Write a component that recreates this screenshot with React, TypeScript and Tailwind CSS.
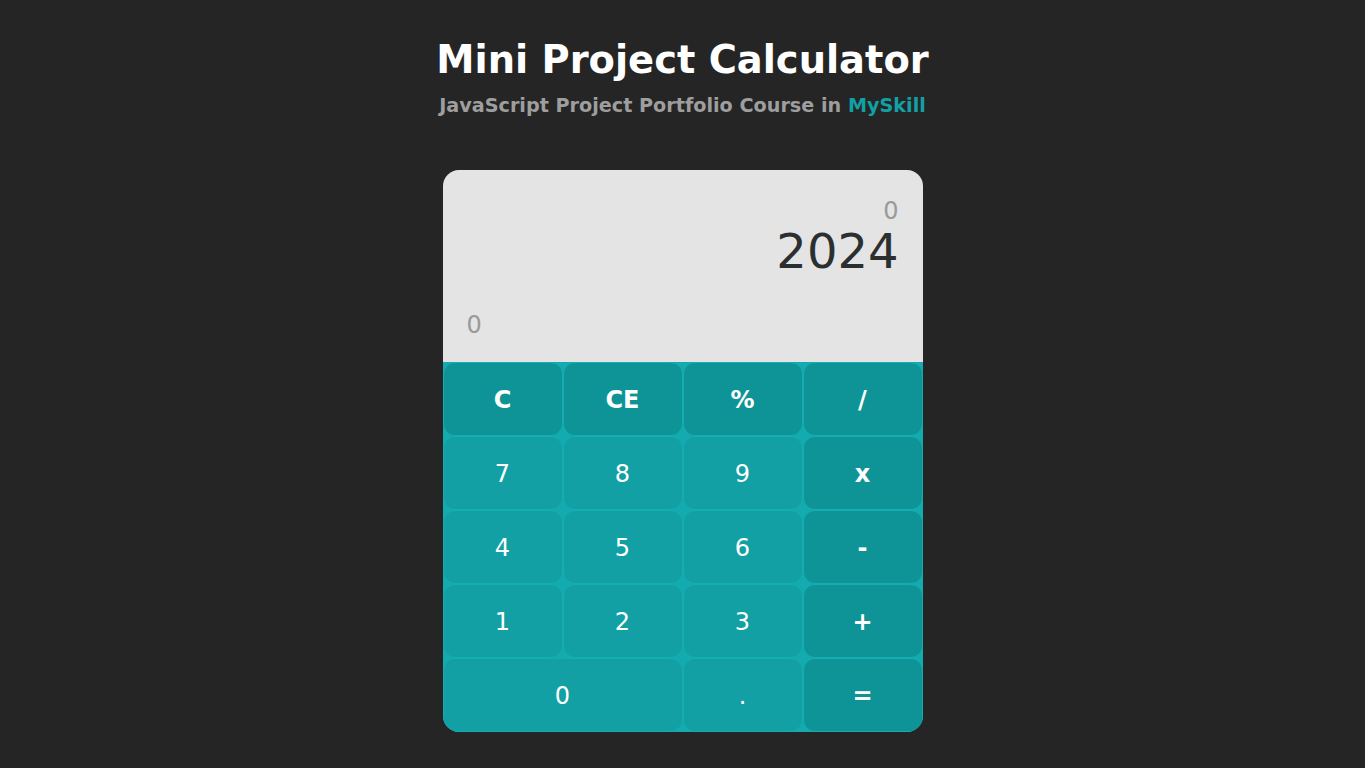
import React from 'react';

const keys = [
  { label: 'C', op: true },
  { label: 'CE', op: true },
  { label: '%', op: true },
  { label: '/', op: true },
  { label: '7' },
  { label: '8' },
  { label: '9' },
  { label: 'x', op: true },
  { label: '4' },
  { label: '5' },
  { label: '6' },
  { label: '-', op: true },
  { label: '1' },
  { label: '2' },
  { label: '3' },
  { label: '+', op: true },
  { label: '0', wide: true },
  { label: '.' },
  { label: '=', op: true },
];

const App = () => {
  return (
    <div className="min-h-screen bg-[#252525] flex flex-col items-center pt-[34px] font-['DejaVu_Sans',sans-serif]">
      <h1 className="text-[38.4px] leading-[52px] font-bold text-white">Mini Project Calculator</h1>
      <p className="mt-[8px] text-[19.2px] leading-6 font-bold text-[#9e9e9e]">
        JavaScript Project Portfolio Course in <span className="text-[#12a0a5]">MySkill</span>
      </p>

      <div className="mt-[52px] w-[480px] rounded-2xl overflow-hidden">
        {/* Display */}
        <div className="h-[192px] bg-[#e4e4e4] px-6 pt-[27px] flex flex-col">
          <div className="text-right text-2xl leading-7 text-[#9a9a9a]">0</div>
          <div className="text-right text-[48px] leading-[52px] text-[#2b2f30]">2024</div>
          <div className="mt-auto mb-[23px] text-2xl leading-7 text-[#9a9a9a]">0</div>
        </div>

        {/* Keypad */}
        <div className="grid grid-cols-4 bg-[#13abaf]">
          {keys.map((k) => (
            <button
              key={k.label}
              className={`h-[74px] rounded-xl border border-[#14aeb2] text-2xl leading-8 pt-[2px] text-white ${
                k.op ? 'bg-[#0e9396] font-bold' : 'bg-[#12a0a5]'
              } ${k.wide ? 'col-span-2' : ''}`}
            >
              {k.label}
            </button>
          ))}
        </div>
      </div>
    </div>
  );
};

export default App;
